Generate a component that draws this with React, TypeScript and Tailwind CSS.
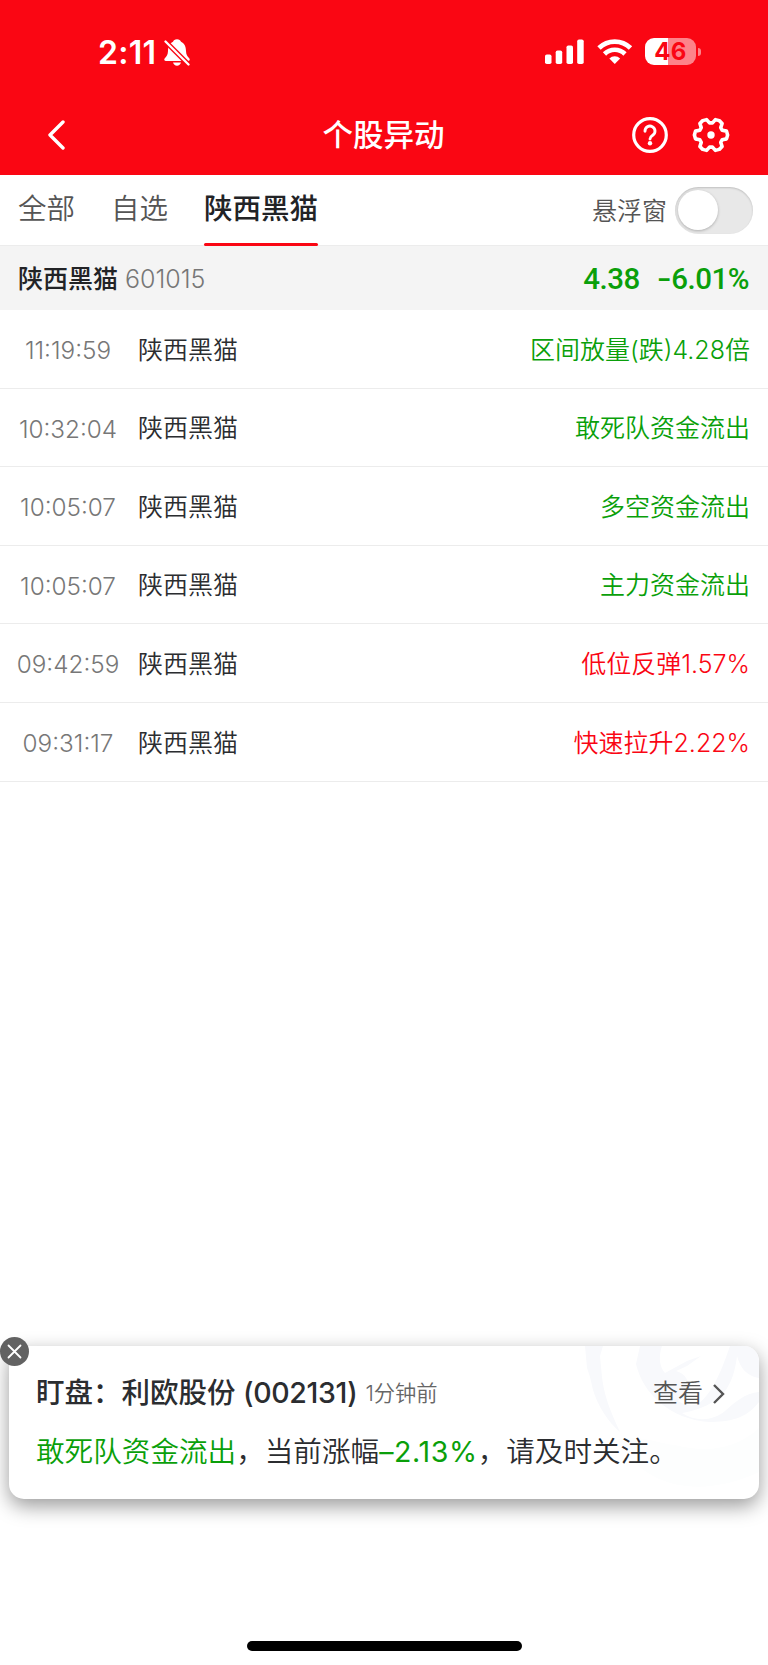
import clsx from 'clsx';

const tabs = [
  { label: '全部', active: false },
  { label: '自选', active: false },
  { label: '陕西黑猫', active: true },
];

const alerts = [
  { time: '11:19:59', name: '陕西黑猫', event: '区间放量(跌)4.28倍', up: false },
  { time: '10:32:04', name: '陕西黑猫', event: '敢死队资金流出', up: false },
  { time: '10:05:07', name: '陕西黑猫', event: '多空资金流出', up: false },
  { time: '10:05:07', name: '陕西黑猫', event: '主力资金流出', up: false },
  { time: '09:42:59', name: '陕西黑猫', event: '低位反弹1.57%', up: true },
  { time: '09:31:17', name: '陕西黑猫', event: '快速拉升2.22%', up: true },
];

// Six-toothed gear outline around (0, 0)
const gearPoints = [0, 60, 120, 180, 240, 300]
  .flatMap((tooth) => [
    [tooth - 23, 12.2],
    [tooth - 14, 16],
    [tooth, 16.6],
    [tooth + 14, 16],
    [tooth + 23, 12.2],
  ])
  .map(([deg, r]) => {
    const rad = (deg * Math.PI) / 180;
    return `${(r * Math.cos(rad)).toFixed(2)},${(r * Math.sin(rad)).toFixed(2)}`;
  })
  .join(' ');

const StatusBar = () => (
  <div className="flex h-[97px] items-start justify-between pl-[98px] pr-[67px] pt-[37px] text-white">
    <div className="flex items-center gap-[8px]">
      <span className="text-[32px] font-semibold leading-[32px] tracking-[0.3px]">2:11</span>
      <svg width="26" height="28" viewBox="0 0 26 28" fill="none">
        <path
          d="M13 .3c-2.200 0-3.500 1-4 2.500C5.400 4.300 4.200 7.500 4 12c-.2 3.800-1.200 5.300-3.200 7.300-1 1.100-.6 2.700 1 2.700h22.400c1.600 0 2-1.600 1-2.700-2-2-3-3.500-3.200-7.300-.2-4.500-1.400-7.700-5-9.200-.5-1.500-1.800-2.500-4-2.500z"
          fill="white"
        />
        <path d="M9 23.500h8c-.5 2-2 3.200-4 3.200s-3.500-1.200-4-3.200z" fill="white" />
        <path d="M-1 0L27 28" stroke="#fa0613" strokeWidth="5" />
        <path d="M1.500 2.500L24.500 25.500" stroke="white" strokeWidth="2.300" strokeLinecap="round" />
      </svg>
    </div>

    <div className="flex items-center pt-[1px]">
      <svg width="39" height="26" viewBox="0 0 39 26" fill="white">
        <rect x="0" y="15.500" width="6.500" height="9.500" rx="1.800" />
        <rect x="10.700" y="11.500" width="6.500" height="13.500" rx="1.800" />
        <rect x="21.500" y="6.500" width="6.500" height="18.500" rx="1.800" />
        <rect x="32.200" y="0.500" width="6.500" height="24.500" rx="1.800" />
      </svg>
      <svg className="ml-[13px]" width="36" height="26" viewBox="0 0 36 26" fill="none">
        <path d="M2 9a22.500 22.500 0 0 1 31.500 0" stroke="white" strokeWidth="4.800" />
        <path d="M7.500 15a14.500 14.500 0 0 1 20.500 0" stroke="white" strokeWidth="4.600" />
        <path d="M17.750 25l-5.400-5.500a7.700 7.700 0 0 1 10.800 0z" fill="white" />
      </svg>
      <div className="ml-[12px] flex h-[27px] w-[51px] items-center justify-center rounded-[9px] bg-linear-to-r from-white from-45% to-[#fd838a] to-45% text-[24px] font-bold tracking-[0.3px] text-[#fa0613]">
        46
      </div>
      <div className="ml-[2px] h-[8px] w-[3px] rounded-r-full bg-[#fd838a]" />
    </div>
  </div>
);

const NavBar = () => (
  <div className="flex h-[78px] items-center justify-between pb-[3px] pl-[46px] pr-[38px] text-white">
    <svg className="w-[77px]" width="77" height="30" viewBox="0 0 77 30" fill="none">
      <path d="M17 2L4 15l13 13" stroke="white" strokeWidth="3.400" strokeLinecap="round" strokeLinejoin="round" />
    </svg>
    <h1 className="pl-[13px] text-[30.500px] font-medium">个股异动</h1>
    <div className="flex items-center gap-[23px]">
      <svg width="38" height="38" viewBox="-19 -19 38 38" fill="none" stroke="white">
        <circle r="16.300" strokeWidth="3.200" />
        <path d="M-5-3.800a5 5 0 1 1 7.700 4.100C.7 1.600 0 2.300 0 4" strokeWidth="2.900" strokeLinecap="round" />
        <circle cy="8.200" r="2.200" fill="white" stroke="none" />
      </svg>
      <svg width="38" height="38" viewBox="-19 -19 38 38" fill="none">
        <polygon points={gearPoints} stroke="white" strokeWidth="3.600" strokeLinejoin="round" />
        <circle r="3.700" fill="white" />
      </svg>
    </div>
  </div>
);

const TabBar = () => (
  <div className="flex h-[71px] items-stretch justify-between border-b border-[#ececec] bg-white pl-[18px] pr-[15px]">
    <div className="flex gap-[36px]">
      {tabs.map((tab) => (
        <div
          key={tab.label}
          className={clsx(
            'flex h-[71px] flex-col justify-between whitespace-nowrap text-[28.500px]',
            tab.active ? 'font-medium text-[#222326]' : 'font-[350] text-[#555]'
          )}
        >
          <span className="pt-[13px] leading-[42px]">{tab.label}</span>
          {tab.active && <div className="h-[3px] rounded-full bg-[#fa0613]" />}
        </div>
      ))}
    </div>
    <div className="flex items-center gap-[8px]">
      <span className="pt-[3px] text-[25px] font-[350] text-[#555]">悬浮窗</span>
      <div className="flex h-[47px] w-[78px] items-center rounded-full bg-[#e8e8e8] px-[3px] shadow-[inset_0_1px_2px_rgba(0,0,0,0.18)]">
        <div className="size-[40px] rounded-full bg-white shadow-[0_1px_3px_rgba(0,0,0,0.25)]" />
      </div>
    </div>
  </div>
);

const WatchCard = () => (
  <div className="relative mx-[9px] mt-[564px] h-[153px] shrink-0 rounded-[15px] bg-white shadow-[0_7px_20px_rgba(0,0,0,0.4)]">
    {/* Faint watermark */}
    <div className="absolute inset-0 overflow-hidden rounded-[15px]">
      <svg className="absolute right-0 top-0" width="176" height="153" viewBox="0 0 176 153">
        <path d="M2 0h18l-3 10 2 21c2 18 8 34 18 55C25 76 15 60 10 44L7 31 4 22 2 0z" fill="#f8f9fc" />
        <path d="M57 0h22c-4 11-2 22 3 27l22-12 14-5-14 10-11 5c10 3 14 10 10 18l-8 12c6 4 13 6 20 3C131 46 140 20 147 0h29v32c-13-2-19-11-22-22-2 18-8 36-22 44-10 8-22 11-33 13 14 9 31 8 43-2 9-8 20-18 34-19v10c-13 17-30 20-50 20-39-3-66-28-73-58z" fill="#f8f9fc" />
        <path d="M34 94c24-6 42 4 58 5 31 8 60 5 84-17v44c-46 22-109 25-142-32z" fill="#fdfefe" />
      </svg>
    </div>
    <button className="absolute -left-[9px] -top-[9px] flex size-[29px] items-center justify-center rounded-full bg-[#626262]">
      <svg width="15" height="15" viewBox="0 0 15 15" stroke="white" strokeWidth="1.800" strokeLinecap="round">
        <path d="M1.500 1.500l12 12M13.500 1.500l-12 12" />
      </svg>
    </button>
    <div className="relative flex h-full flex-col pl-[27px] pr-[34px] pt-[27px] text-[#2b2d30]">
      <div className="flex h-[42px] items-center whitespace-nowrap">
        <span className="text-[28.500px] font-medium">
          盯盘：利欧股份 <span className="tracking-[-0.35px]">(002131)</span>
        </span>
        <span className="ml-[8px] text-[21.300px] font-[350] text-[#666]">1分钟前</span>
        <span className="ml-auto text-[25px] font-[350] text-[#555]">查看</span>
        <svg className="ml-[9px]" width="13" height="22" viewBox="0 0 13 22" fill="none">
          <path d="M2 2l9 9-9 9" stroke="#555" strokeWidth="2.400" />
        </svg>
      </div>
      <p className="mt-[16px] whitespace-nowrap text-[28.600px] font-[350] leading-[42px]">
        <span className="text-[#0a9f0a]">敢死队资金流出</span>，当前涨幅
        <span className="font-normal tracking-[0.6px] text-[#0a9f0a]">–2.13%</span>，请及时关注。
      </p>
    </div>
  </div>
);

const App = () => {
  return (
    <main className="flex h-[1665px] w-[768px] flex-col overflow-hidden bg-white font-[Inter,'Noto_Sans_CJK_SC',sans-serif]">
      <header className="bg-[#fa0613]">
        <StatusBar />
        <NavBar />
      </header>
      <TabBar />

      <section className="flex h-[64px] items-center justify-between bg-[#f4f4f4] pl-[18px] pr-[19px] pt-[2px]">
        <div className="flex items-center gap-[7px] pt-[1px] text-[25px]">
          <span className="font-medium text-[#222326]">陕西黑猫</span>
          <span className="font-[350] text-[#777]">601015</span>
        </div>
        <div className="flex items-center gap-[21px] pt-[1px] font-[Roboto,sans-serif] text-[29.500px] font-medium tracking-[-0.5px] text-[#0a9f0a]">
          <span>4.38</span>
          <span>
            <span className="mr-[1px] inline-block origin-right scale-x-140">-</span>6.01%
          </span>
        </div>
      </section>

      <ul>
        {alerts.map((alert, i) => (
          <li
            key={i}
            className="flex h-[78.600px] items-center whitespace-nowrap border-b border-[#ececec] pr-[18px] pt-[3px] text-[25px] font-[350]"
          >
            <span className="w-[136px] text-center text-[24.300px] text-[#777]">{alert.time}</span>
            <span className="pl-[2px] text-[#2b2d30]">{alert.name}</span>
            <span className={clsx('ml-auto', alert.up ? 'text-[#fa0613]' : 'text-[#0a9f0a]')}>{alert.event}</span>
          </li>
        ))}
      </ul>

      <WatchCard />

      {/* Home indicator */}
      <div className="mx-auto mb-[14px] mt-auto h-[10px] w-[275px] rounded-full bg-black" />
    </main>
  );
};

export default App;
